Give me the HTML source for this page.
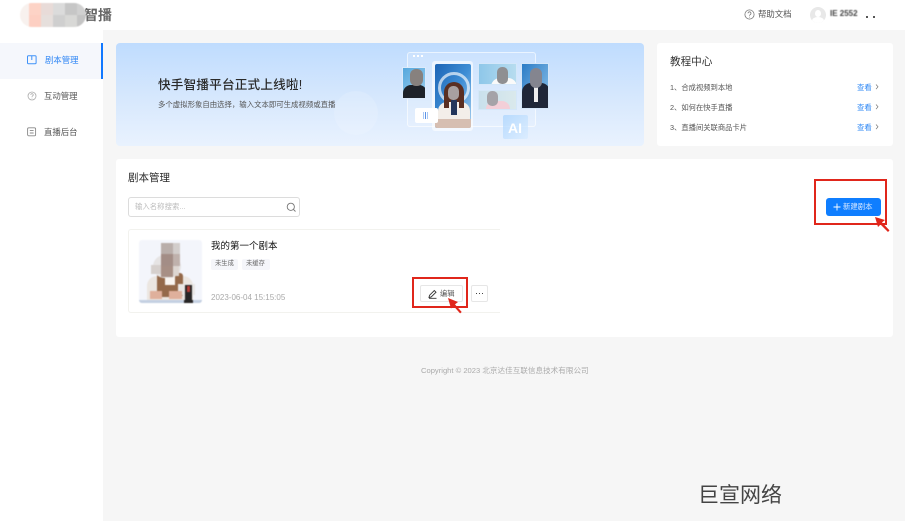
<!DOCTYPE html>
<html lang="zh"><head><meta charset="utf-8"><title>剧本管理</title>
<style>
*{box-sizing:border-box}
html,body{margin:0;padding:0}
body{width:905px;height:521px;position:relative;overflow:hidden;background:#f6f6f6;font-family:"Liberation Sans","Noto Sans CJK SC",sans-serif;color:#333}
.a{position:absolute}
.t{position:absolute;white-space:nowrap;line-height:1;filter:blur(.3px)}
svg{position:absolute;overflow:visible}
</style></head><body>
<div class="a" style="left:0;top:0;width:905px;height:30px;background:#fff"></div>
<div class="a" style="left:0;top:30px;width:103px;height:491px;background:#fff"></div>

<!-- logo mosaic -->
<div class="t" style="left:84px;top:8px;font-size:14px;font-weight:700;color:#666;width:28px;overflow:hidden">智播</div>
<div class="a" style="left:20px;top:3px;width:66px;height:24px;border-radius:12px;overflow:hidden;background:#f8f1ee;filter:blur(.5px)">
<div class="a" style="left:9px;top:0;width:12px;height:12px;background:#fdd3c6"></div><div class="a" style="left:9px;top:12px;width:12px;height:12px;background:#fdcfc2"></div>
<div class="a" style="left:21px;top:0;width:12px;height:12px;background:#e8dbd8"></div><div class="a" style="left:21px;top:12px;width:12px;height:12px;background:#e6dfdc"></div>
<div class="a" style="left:33px;top:0;width:12px;height:12px;background:#dbdbdb"></div><div class="a" style="left:33px;top:12px;width:12px;height:12px;background:#cfcfcf"></div>
<div class="a" style="left:45px;top:0;width:12px;height:12px;background:#c6c6c6"></div><div class="a" style="left:45px;top:12px;width:12px;height:12px;background:#d8d8d6"></div>
<div class="a" style="left:57px;top:0;width:9px;height:12px;background:#d0d0d0"></div><div class="a" style="left:57px;top:12px;width:9px;height:12px;background:#c4c4c4"></div>
</div>

<!-- header right -->
<svg style="left:744px;top:9px" width="11" height="11" viewBox="0 0 11 11" fill="none" stroke="#777" stroke-width=".8"><circle cx="5.5" cy="5.5" r="4.6"/><path d="M4 4.3a1.5 1.5 0 1 1 2.3 1.3c-.6.4-.8.6-.8 1.2M5.5 7.8v.7"/></svg>
<div class="t" style="left:758px;top:10px;font-size:8.4px;color:#555">帮助文档</div>
<div class="a" style="left:810px;top:7px;width:16px;height:16px;border-radius:50%;background:#e8e8e8;overflow:hidden">
<div class="a" style="left:5px;top:3px;width:6px;height:7px;border-radius:50%;background:#fff"></div><div class="a" style="left:2px;top:10px;width:12px;height:8px;border-radius:50%;background:#fff"></div></div>
<div class="t" style="left:830px;top:10px;font-size:8px;font-weight:700;color:#444;width:28px;overflow:hidden;filter:blur(.5px)">IE 25520</div>
<div class="a" style="left:866px;top:16px;width:2px;height:2px;background:#555"></div>
<div class="a" style="left:873px;top:16px;width:2px;height:2px;background:#555"></div>

<!-- sidebar -->
<div class="a" style="left:0;top:43px;width:103px;height:36px;background:#f5f7fc"></div>
<div class="a" style="left:101px;top:43px;width:2px;height:36px;background:#1178ff"></div>
<svg style="left:27px;top:55px" width="10" height="10" viewBox="0 0 10 10" fill="none" stroke="#3f92f8" stroke-width="1"><rect x=".5" y=".7" width="8.6" height="8" rx="1"/><path d="M4.8 1v4"/></svg>
<div class="t" style="left:45px;top:56px;font-size:8.4px;color:#2f86f5">剧本管理</div>
<svg style="left:27px;top:91px" width="10" height="10" viewBox="0 0 10 10" fill="none" stroke="#aaa" stroke-width=".8"><circle cx="5" cy="5" r="4"/><path d="M3.8 3.9a1.2 1.2 0 1 1 1.8 1c-.5.3-.6.5-.6 1M5 6.8v.6"/></svg>
<div class="t" style="left:44px;top:92px;font-size:8.4px;color:#555">互动管理</div>
<svg style="left:27px;top:127px" width="10" height="10" viewBox="0 0 10 10" fill="none" stroke="#888" stroke-width=".9"><rect x=".6" y=".8" width="8" height="8" rx="1.2"/><path d="M2.8 3.6h3.8M2.8 6h3.8"/></svg>
<div class="t" style="left:44px;top:128px;font-size:8.4px;color:#555">直播后台</div>

<!-- banner -->
<div class="a" style="left:116px;top:43px;width:528px;height:103px;border-radius:4px;overflow:hidden;background:linear-gradient(180deg,#bfdcfe 0%,#d7e8fd 55%,#e9f2fe 100%)">
<div class="a" style="left:218px;top:48px;width:44px;height:44px;border-radius:50%;background:rgba(255,255,255,.14)"></div>
<div class="a" style="left:291px;top:9px;width:129px;height:75px;border:1px solid rgba(255,255,255,.6);border-radius:3px;background:rgba(255,255,255,.14)"></div>
<div class="a" style="left:297px;top:12px;width:2px;height:2px;background:#fff;box-shadow:4px 0 #fff,8px 0 #fff"></div>
<!-- left tile -->
<div class="a" style="left:286px;top:24px;width:24px;height:32px;background:linear-gradient(135deg,#55a7dd,#9fd0ee);border:1px solid #dbeafb;overflow:hidden">
<div class="a" style="left:0;top:17px;width:24px;height:16px;background:#1e2229;border-radius:8px 8px 0 0"></div><div class="a" style="left:7px;top:1px;width:13px;height:17px;border-radius:6px;background:#87817e"></div></div>
<!-- center tile -->
<div class="a" style="left:316px;top:18px;width:41px;height:70px;background:rgba(255,255,255,.6);border-radius:3px"></div>
<div class="a" style="left:319px;top:21px;width:36px;height:64px;overflow:hidden;background:linear-gradient(120deg,#1c64b5,#3e8ed5 50%,#a8cfee);border-radius:2px">
<div class="a" style="left:3px;top:8px;width:32px;height:32px;border:3px solid rgba(255,255,255,.65);border-radius:50%"></div>
<div class="a" style="left:9px;top:18px;width:20px;height:32px;border-radius:10px 10px 2px 2px;background:#5a2f22"></div>
<div class="a" style="left:3px;top:38px;width:32px;height:18px;background:#f3eee9;border-radius:9px 9px 0 0"></div>
<div class="a" style="left:9px;top:30px;width:5px;height:14px;background:#5a2f22"></div>
<div class="a" style="left:24px;top:30px;width:5px;height:14px;background:#5a2f22"></div>
<div class="a" style="left:16px;top:36px;width:6px;height:15px;background:#23365c"></div>
<div class="a" style="left:13px;top:22px;width:11px;height:14px;border-radius:5px;background:#a8a0a0"></div>
<div class="a" style="left:0;top:55px;width:36px;height:9px;background:#d6beb1"></div></div>
<!-- upper right -->
<div class="a" style="left:362px;top:20px;width:39px;height:22px;overflow:hidden;background:linear-gradient(90deg,#8ec7e9,#b7dcef);border:1px solid #d4e7f9">
<div class="a" style="left:12px;top:14px;width:26px;height:12px;border-radius:9px 9px 0 0;background:#fafafa"></div><div class="a" style="left:18px;top:3px;width:11px;height:17px;border-radius:5px;background:#8f8f92"></div></div>
<!-- lower right -->
<div class="a" style="left:362px;top:47px;width:39px;height:20px;overflow:hidden;background:linear-gradient(90deg,#c9e0ec,#dae9ec);border:1px solid #d4e7f9">
<div class="a" style="left:7px;top:10px;width:24px;height:12px;border-radius:8px 8px 0 0;background:#f3cfd8"></div><div class="a" style="left:8px;top:0;width:11px;height:15px;border-radius:5px;background:#a5a3a8"></div></div>
<!-- right tile -->
<div class="a" style="left:405px;top:20px;width:28px;height:46px;overflow:hidden;background:linear-gradient(120deg,#2b7cc6,#8ec3ea);border:1px solid #d4e7f9">
<div class="a" style="left:0;top:19px;width:28px;height:27px;border-radius:9px 9px 0 0;background:#1f2738"></div><div class="a" style="left:12px;top:22px;width:4px;height:16px;background:#eee"></div><div class="a" style="left:8px;top:4px;width:12px;height:20px;border-radius:6px;background:#84858f"></div></div>
<!-- bubble -->
<div class="a" style="left:299px;top:65px;width:23px;height:15px;border-radius:2px;background:#fff"></div>
<div class="a" style="left:309px;top:69px;width:1px;height:7px;background:#5b93e6;box-shadow:2px 0 #a8c8f5,-2px 0 #a8c8f5"></div>
<!-- AI -->
<div class="a" style="left:387px;top:72px;width:25px;height:24px;background:linear-gradient(135deg,rgba(170,212,255,.75),rgba(215,235,255,.7));border-radius:2px"></div>
<div class="t" style="left:392px;top:78px;font-size:14px;font-weight:700;color:#fff;filter:blur(.3px)">AI</div>
<div class="t" style="left:42px;top:35.5px;font-size:12.6px;color:#2a2a2a;letter-spacing:.2px;font-weight:500">快手智播平台正式上线啦!</div>
<div class="t" style="left:42px;top:58px;font-size:7.4px;color:#555">多个虚拟形象自由选择，输入文本即可生成视频或直播</div>
</div>

<!-- tutorial -->
<div class="a" style="left:657px;top:43px;width:236px;height:103px;background:#fff;border-radius:3px"></div>
<div class="t" style="left:670px;top:57px;font-size:10.6px;color:#333">教程中心</div>
<div class="t" style="left:670px;top:83.5px;font-size:7.3px;color:#555">1、合成视频到本地</div>
<div class="t" style="left:670px;top:103.5px;font-size:7.3px;color:#555">2、如何在快手直播</div>
<div class="t" style="left:670px;top:123.5px;font-size:7.3px;color:#555">3、直播间关联商品卡片</div>
<div class="t" style="left:857px;top:83.5px;font-size:7.4px;color:#2f88f5">查看</div>
<div class="t" style="left:857px;top:103.5px;font-size:7.4px;color:#2f88f5">查看</div>
<div class="t" style="left:857px;top:123.5px;font-size:7.4px;color:#2f88f5">查看</div>
<svg style="left:875px;top:84px" width="4" height="6" fill="none" stroke="#777" stroke-width=".7"><path d="M1 .5l2 2.3-2 2.3"/></svg>
<svg style="left:875px;top:104px" width="4" height="6" fill="none" stroke="#777" stroke-width=".7"><path d="M1 .5l2 2.3-2 2.3"/></svg>
<svg style="left:875px;top:124px" width="4" height="6" fill="none" stroke="#777" stroke-width=".7"><path d="M1 .5l2 2.3-2 2.3"/></svg>

<!-- main card -->
<div class="a" style="left:116px;top:159px;width:777px;height:178px;background:#fff;border-radius:3px"></div>
<div class="t" style="left:128px;top:173px;font-size:10.5px;color:#2a2a2a">剧本管理</div>
<div class="a" style="left:128px;top:197px;width:172px;height:20px;border:1px solid #dcdcdc;border-radius:3px"></div>
<div class="t" style="left:135px;top:203px;font-size:7.4px;color:#bbb">输入名称搜索...</div>
<svg style="left:286px;top:202px" width="11" height="11" fill="none" stroke="#777" stroke-width=".9"><circle cx="4.8" cy="4.8" r="3.6"/><path d="M7.5 7.5l2 2"/></svg>

<!-- script card -->
<div class="a" style="left:128px;top:229px;width:372px;height:84px;border:1px solid #f2f2ee;border-right:none;border-radius:3px 0 0 3px"></div>
<div class="a" style="left:139px;top:240px;width:63px;height:63px;background:#f3f5fb;border-radius:3px;overflow:hidden;filter:blur(.4px)">
<div class="a" style="left:8px;top:36px;width:46px;height:24px;border-radius:10px 10px 0 0;background:#ebe6e1"></div>
<div class="a" style="left:18px;top:33px;width:26px;height:24px;background:#94694a;border-radius:3px"></div>
<div class="a" style="left:26px;top:33px;width:10px;height:12px;background:#f8f4f0"></div>
<div class="a" style="left:14px;top:15px;width:28px;height:23px;border-radius:12px;background:#e6e4e4"></div>
<div class="a" style="left:22px;top:3px;width:12px;height:11px;background:#b9aeaa"></div>
<div class="a" style="left:34px;top:3px;width:7px;height:11px;background:#d2cdcb"></div>
<div class="a" style="left:22px;top:14px;width:12px;height:12px;background:#a38d86"></div>
<div class="a" style="left:34px;top:14px;width:7px;height:12px;background:#bfb1ac"></div>
<div class="a" style="left:22px;top:26px;width:12px;height:11px;background:#a78f85"></div>
<div class="a" style="left:12px;top:25px;width:10px;height:9px;background:#d6d0cd"></div>
<div class="a" style="left:34px;top:26px;width:6px;height:10px;background:#ddd6d1"></div>
<div class="a" style="left:39px;top:44px;width:17px;height:11px;background:#e9e7e5"></div>
<div class="a" style="left:46px;top:45px;width:7px;height:18px;background:#272525"></div>
<div class="a" style="left:48px;top:46px;width:3px;height:6px;background:#b53c35"></div>
<div class="a" style="left:11px;top:51px;width:12px;height:8px;background:#dfb09c"></div>
<div class="a" style="left:30px;top:51px;width:13px;height:8px;background:#dfb09c"></div>
<div class="a" style="left:0;top:60px;width:63px;height:3px;background:#c4d0e2"></div>
<div class="a" style="left:45px;top:60px;width:9px;height:3px;background:#272525"></div>
</div>
<div class="t" style="left:211px;top:242px;font-size:9.5px;color:#111">我的第一个剧本</div>
<div class="a" style="left:211px;top:259px;width:27px;height:11px;background:#f5f6fa;border-radius:2px"></div>
<div class="t" style="left:215px;top:261px;font-size:6.3px;color:#666">未生成</div>
<div class="a" style="left:242px;top:259px;width:28px;height:11px;background:#f5f6fa;border-radius:2px"></div>
<div class="t" style="left:246px;top:261px;font-size:6.3px;color:#666">未缓存</div>
<div class="t" style="left:211px;top:294px;font-size:8px;color:#aaa">2023-06-04 15:15:05</div>

<!-- edit -->
<div class="a" style="left:420px;top:285px;width:43px;height:17px;border:1px solid #e6e6e6;border-radius:2px;background:#fff"></div>
<svg style="left:428px;top:289px" width="10" height="10" fill="none" stroke="#333" stroke-width=".9"><path d="M1 8.5l.5-2.2L6.3 1.5l1.7 1.7-4.8 4.8zM1 9.3h7.5"/></svg>
<div class="t" style="left:440px;top:290px;font-size:7.2px;color:#555">编辑</div>
<div class="a" style="left:471px;top:285px;width:17px;height:17px;border:1px solid #e6e6e6;border-radius:2px;background:#fff"></div>
<div class="a" style="left:476px;top:293px;width:1px;height:1px;background:#444;box-shadow:3px 0 #444,6px 0 #444"></div>
<div class="a" style="left:412px;top:277px;width:56px;height:31px;border:2px solid #e0261b"></div>
<svg style="left:446px;top:297px" width="20" height="20" fill="#e0261b" stroke="none"><path d="M2 1l10 4-3 2.4 6.7 7.6-1.6 1.4L7.5 9 5 11.5z"/></svg>

<!-- new button -->
<div class="a" style="left:826px;top:198px;width:55px;height:18px;background:#0f7eff;border-radius:3px"></div>
<svg style="left:833px;top:203px" width="8" height="8" fill="none" stroke="#fff" stroke-width=".9"><path d="M4 .5v7M.5 4h7"/></svg>
<div class="t" style="left:843px;top:203px;font-size:7.4px;color:#dbeaff">新建剧本</div>
<div class="a" style="left:814px;top:179px;width:73px;height:46px;border:2px solid #e0261b"></div>
<svg style="left:875px;top:216px" width="16" height="18" fill="#e0261b" stroke="none"><path d="M0 1l10 3-3 2.4 7.5 8-1.5 1.6L5.5 8.5 3 11z"/></svg>

<div class="t" style="left:421px;top:367px;font-size:7.6px;color:#aaa">Copyright © 2023 北京达佳互联信息技术有限公司</div>
<div class="t" style="left:698px;top:485px;font-size:21px;color:#444;filter:none">巨宣网络</div>
</body></html>
